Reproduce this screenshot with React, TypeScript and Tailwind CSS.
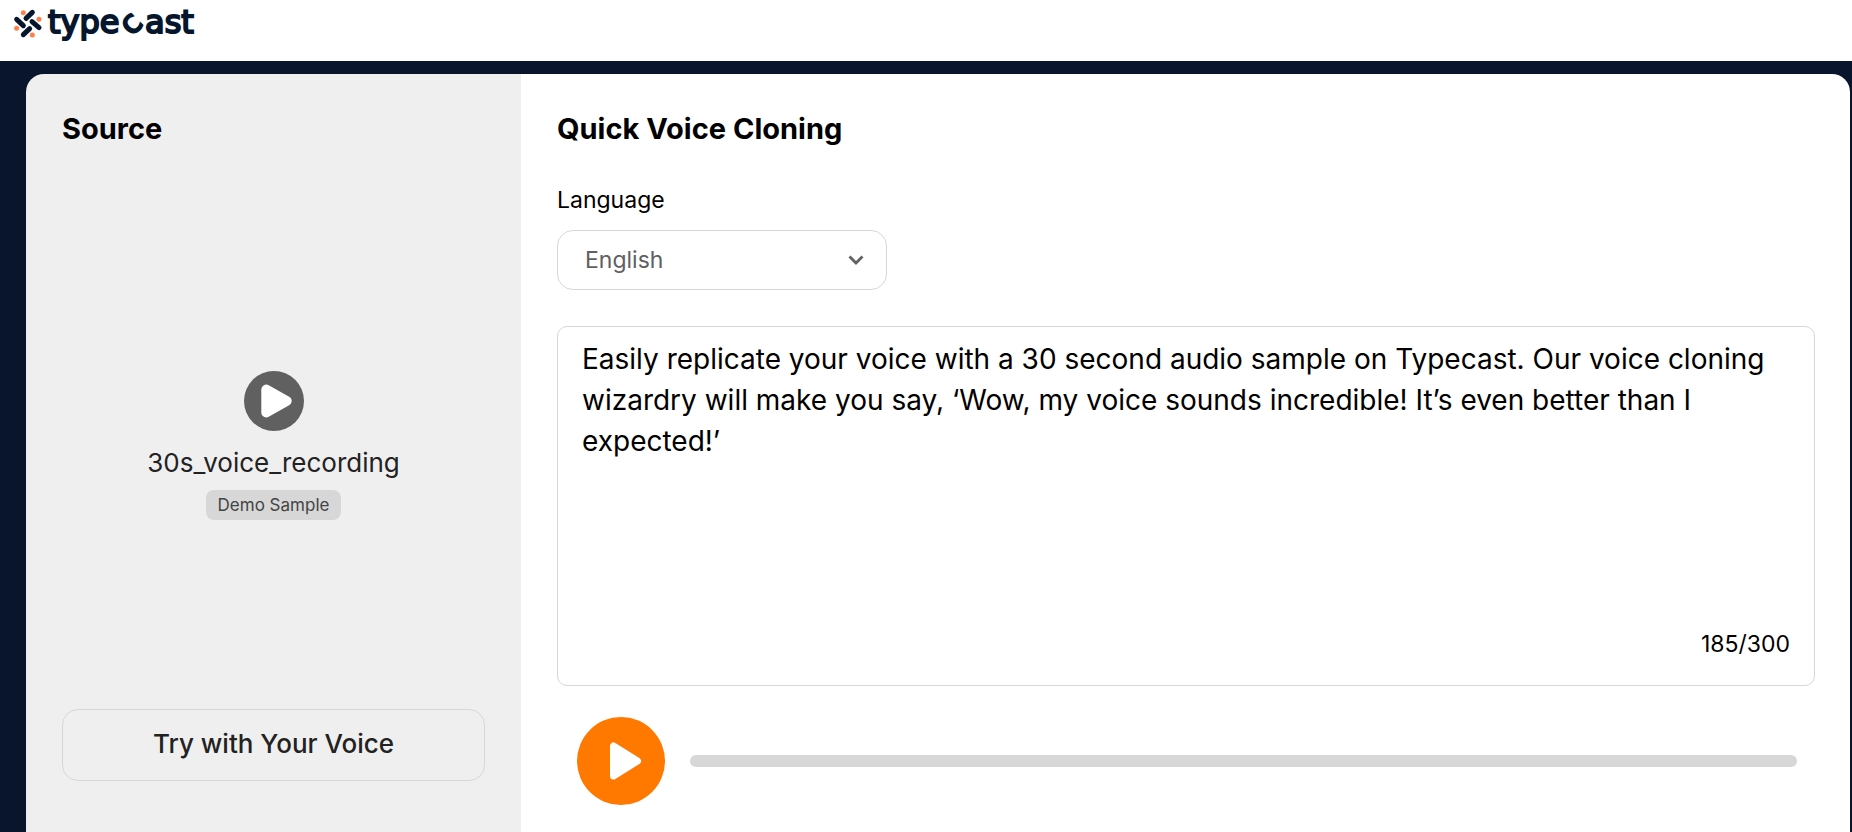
import React, { useState } from 'react';

const SAMPLE_TEXT =
  'Easily replicate your voice with a 30 second audio sample on Typecast. Our voice cloning wizardry will make you say, ‘Wow, my voice sounds incredible! It’s even better than I expected!’';
const MAX_LENGTH = 300;

const Logo: React.FC = () => (
  <a href="#" className="flex items-start text-[#06162d]" aria-label="typecast">
    <svg className="w-10 h-10" viewBox="0 0 120 120" fill="none">
      <g stroke="currentColor" strokeWidth="15" strokeLinecap="round">
        <path d="M54 43 73 25" />
        <path d="M26 46 46 65" />
        <path d="M72 53 93 71" />
        <path d="M46 92 65 74" />
      </g>
      <g fill="#ff7f4d">
        <circle cx="46" cy="26" r="7.500" />
        <circle cx="93" cy="46" r="7.500" />
        <circle cx="26" cy="73" r="7.500" />
        <circle cx="73" cy="93" r="7.500" />
      </g>
    </svg>
    <span className="font-['DejaVu_Sans',sans-serif] text-[32px] leading-9 [-webkit-text-stroke:2px_currentColor]">
      type
      <span className="inline-block mx-1 leading-3 origin-[50%_70%] -rotate-45">c</span>
      ast
    </span>
  </a>
);

const SourcePanel: React.FC = () => (
  <aside className="w-[495px] shrink-0 bg-[#efefef] px-9 pt-9 pb-[51px] flex flex-col">
    <h2 className="text-[29px] leading-[38px] font-bold text-black">Source</h2>

    <div className="flex-1 flex flex-col items-center justify-center pt-[34px]">
      <button type="button" aria-label="Play sample" className="w-15 h-15 rounded-full bg-[#606060] text-white cursor-pointer">
        <svg className="w-15 h-15" viewBox="0 0 60 60" fill="currentColor" stroke="currentColor" strokeWidth="10" strokeLinejoin="round">
          <path d="M22.300 18.600v22.800L42.700 30z" />
        </svg>
      </button>
      <p className="mt-3 text-[26px] leading-10 text-[#222222]">30s_voice_recording</p>
      <span className="mt-[7px] px-3 rounded-lg bg-[#d7d7d7] text-[17px] leading-[30px] text-[#444444]">Demo Sample</span>
    </div>

    <button type="button" className="h-18 w-full pb-1 rounded-2xl border border-[#d7d7d7] text-[26px] font-medium text-[#222222] cursor-pointer">
      Try with Your Voice
    </button>
  </aside>
);

const CloningPanel: React.FC = () => {
  const [language, setLanguage] = useState('English');
  const [text, setText] = useState(SAMPLE_TEXT);

  return (
    <main className="flex-1 min-w-0 bg-white pl-9 pr-[35px] pt-9 pb-[27px]">
      <h2 className="text-[29px] leading-[38px] font-bold text-black">Quick Voice Cloning</h2>

      <label htmlFor="language" className="block mt-9 text-[23px] leading-8 text-black">Language</label>
      <div className="relative mt-[14px] w-[330px]">
        <select
          id="language"
          value={language}
          onChange={(e) => setLanguage(e.target.value)}
          className="block w-full h-15 pl-[27px] pr-14 rounded-2xl border border-[#d7d7d7] bg-white text-[23px] text-[#606060] appearance-none cursor-pointer"
        >
          <option>English</option>
          <option>Korean</option>
        </select>
        <svg className="absolute right-[23px] top-6 w-4 h-3 pointer-events-none" viewBox="0 0 16 12" fill="none" stroke="#606060" strokeWidth="2.800">
          <path d="M1.500 2.500 8 9l6.500-6.500" />
        </svg>
      </div>

      <div className="mt-9 h-[360px] rounded-[10px] border border-[#d7d7d7] flex flex-col">
        <textarea
          aria-label="Script"
          value={text}
          maxLength={MAX_LENGTH}
          onChange={(e) => setText(e.target.value)}
          className="flex-1 w-full px-6 pt-3 text-[28px] leading-[41px] text-black resize-none outline-none"
        />
        <p className="px-6 pb-[25px] text-right text-[23px] leading-8 text-black">{text.length}/{MAX_LENGTH}</p>
      </div>

      <div className="mt-[31px] pl-5 pr-[18px] flex items-center gap-[25px]">
        <button type="button" aria-label="Play result" className="w-22 h-22 shrink-0 rounded-full bg-[#ff7800] text-white cursor-pointer">
          <svg className="w-22 h-22" viewBox="0 0 88 88" fill="currentColor" stroke="currentColor" strokeWidth="7" strokeLinejoin="round">
            <path d="M36.500 29v30l24-15z" />
          </svg>
        </button>
        <div className="flex-1 h-3 rounded-full bg-[#d7d7d7]" role="progressbar" aria-valuenow={0} aria-label="Playback" />
      </div>
    </main>
  );
};

export default function App() {
  return (
    <div className="min-h-screen flex flex-col bg-[#08152c] font-['Inter','Liberation_Sans',sans-serif]">
      <header className="h-[61px] bg-white px-2 pt-1">
        <Logo />
      </header>
      <div className="flex-1 flex pl-[26px] pr-0.5 pt-[13px]">
        <div className="flex-1 flex min-w-0 rounded-t-[18px] overflow-hidden">
          <SourcePanel />
          <CloningPanel />
        </div>
      </div>
    </div>
  );
}
